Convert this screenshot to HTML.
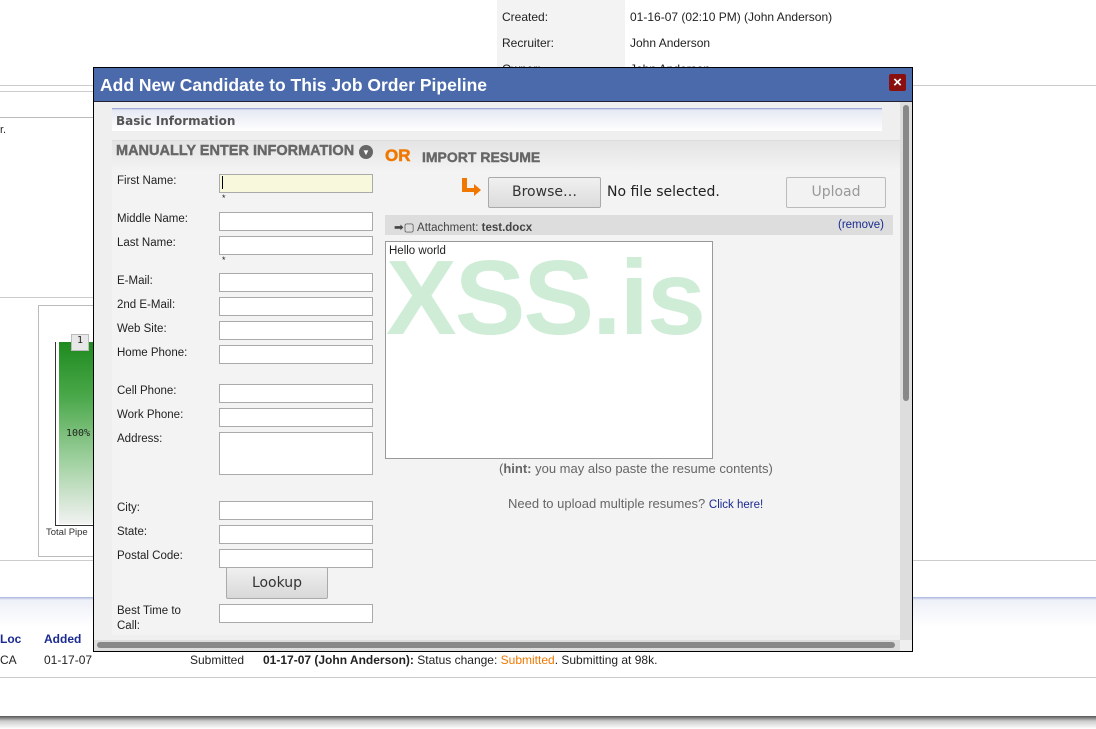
<!DOCTYPE html>
<html><head><style>
body{margin:0;width:1096px;height:729px;overflow:hidden;background:#fff;font-family:"Liberation Sans",sans-serif;font-size:12px;color:#222;position:relative}
.a{position:absolute}
.lbl{position:absolute;left:117px;font-size:11.5px;color:#222}
.in{position:absolute;left:219px;width:152px;height:17px;border:1px solid #aaa;background:#fff}
</style></head><body>
<div class="a" style="left:497px;top:0;width:128px;height:85px;background:#f3f3f3"></div>
<div class="a" style="left:502px;top:10px">Created:</div>
<div class="a" style="left:630px;top:10px">01-16-07 (02:10 PM) (John Anderson)</div>
<div class="a" style="left:502px;top:36px">Recruiter:</div>
<div class="a" style="left:630px;top:36px">John Anderson</div>
<div class="a" style="left:502px;top:62px">Owner:</div>
<div class="a" style="left:630px;top:62px">John Anderson</div>
<div class="a" style="left:0;top:85px;width:1096px;height:1px;background:#ccc"></div>
<div class="a" style="left:0;top:91px;width:93px;height:1px;background:#ccc"></div>
<div class="a" style="left:0;top:117px;width:93px;height:1px;background:#bbb"></div>
<div class="a" style="left:0;top:124px;font-size:11px">r.</div>
<div class="a" style="left:0;top:297px;width:93px;height:1px;background:#ccc"></div>
<div class="a" style="left:38px;top:305px;width:60px;height:250px;border:1px solid #bbb"></div>
<div class="a" style="left:59px;top:342px;width:40px;height:182px;background:linear-gradient(#1e8a1e,#4aa84a 30%,#9fd09f 65%,#f2f2f2)"></div>
<div class="a" style="left:55px;top:342px;width:1px;height:184px;background:#333"></div>
<div class="a" style="left:55px;top:525px;width:40px;height:1px;background:#333"></div>
<div class="a" style="left:71px;top:334px;width:16px;height:15px;background:#e8e8e8;border:1px solid #bbb;font-size:10px;text-align:center;font-family:'DejaVu Sans Mono',monospace">1</div>
<div class="a" style="left:66px;top:428px;font-size:10px;font-family:'DejaVu Sans Mono',monospace">100%</div>
<div class="a" style="left:46px;top:527px;font-size:9.5px;color:#333">Total Pipe</div>
<div class="a" style="left:0;top:560px;width:1096px;height:1px;background:#ccc"></div>
<div class="a" style="left:0;top:597px;width:1096px;height:30px;background:linear-gradient(#a8b4dc,#eef0f8 3px,#fff)"></div>
<div class="a" style="left:0;top:632px;font-weight:bold;color:#1a2a90">Loc</div>
<div class="a" style="left:44px;top:632px;font-weight:bold;color:#1a2a90">Added</div>
<div class="a" style="left:0;top:653px">CA</div>
<div class="a" style="left:44px;top:653px">01-17-07</div>
<div class="a" style="left:190px;top:653px">Submitted</div>
<div class="a" style="left:263px;top:653px"><b>01-17-07 (John Anderson):</b> Status change: <span style="color:#f07800">Submitted</span>. Submitting at 98k.</div>
<div class="a" style="left:0;top:677px;width:1096px;height:1px;background:#ccc"></div>
<div class="a" style="left:0;top:716px;width:1096px;height:13px;background:linear-gradient(#555,#ccc 5px,#fff)"></div>

<div class="a" style="left:93px;top:67px;width:818px;height:583px;border:1px solid #000;background:#efefef">
 <div class="a" style="left:0;top:0;width:818px;height:33px;background:#4a6aac;border-bottom:1px solid #223"></div>
 <div class="a" style="left:6px;top:7px;color:#fff;font-size:17.5px;font-weight:bold">Add New Candidate to This Job Order Pipeline</div>
 <div class="a" style="left:795px;top:6px;width:17px;height:17px;background:#8a1010;border-radius:2px;color:#fff;font-size:15px;font-weight:bold;text-align:center;line-height:17px">×</div>
 <div class="a" style="left:806px;top:34px;width:12px;height:538px;background:#ddd"><div style="margin:3px 3px;width:6px;height:296px;background:#888;border-radius:3px"></div></div>
 <div class="a" style="left:0;top:572px;width:806px;height:11px;background:#ddd"><div style="margin:2px 3px;width:798px;height:6px;background:#888;border-radius:3px"></div></div>
</div>
<div class="a" style="left:112px;top:108px;width:770px;height:23px;background:linear-gradient(#8898d0,#e6e9f4 2px,#fff);"></div>
<div class="a" style="left:116px;top:114px;font-weight:bold;font-size:12px;color:#555;font-family:'DejaVu Sans',sans-serif">Basic Information</div>
<div class="a" style="left:112px;top:140px;width:788px;height:494px;background:#f3f3f3;border-top:1px solid #ddd"></div>
<div class="a" style="left:112px;top:141px;width:788px;height:30px;background:linear-gradient(#e4e4e4,#f3f3f3)"></div>
<div class="a" style="left:116px;top:143px;font-weight:bold;font-size:14.5px;color:#666;-webkit-text-stroke:0.4px #666">MANUALLY ENTER INFORMATION</div>
<div class="a" style="left:359px;top:145px;width:14px;height:14px;border-radius:7px;background:#666;color:#fff;font-size:8px;text-align:center;line-height:15px">▼</div>
<div class="a" style="left:385px;top:146px;font-weight:bold;font-size:17px;color:#f07800;-webkit-text-stroke:0.5px #f07800">OR</div>
<div class="a" style="left:422px;top:149px;font-weight:bold;font-size:14px;color:#666;-webkit-text-stroke:0.4px #666">IMPORT RESUME</div>
<div class="a" style="left:462px;top:178px;width:5px;height:12px;background:#f07800"></div>
<div class="a" style="left:462px;top:188px;width:14px;height:4px;background:#f07800"></div>
<div class="a" style="left:474px;top:184px;border-left:7px solid #f07800;border-top:6px solid transparent;border-bottom:6px solid transparent"></div>
<div class="a" style="left:488px;top:177px;width:111px;height:29px;border:1px solid #aaa;border-radius:2px;background:linear-gradient(#f0f0f0,#dcdcdc);font-size:14px;text-align:center;line-height:29px;color:#333;font-family:'DejaVu Sans',sans-serif">Browse…</div>
<div class="a" style="left:607px;top:184px;font-size:14px;font-family:'DejaVu Sans',sans-serif">No file selected.</div>
<div class="a" style="left:786px;top:177px;width:98px;height:29px;border:1px solid #bbb;border-radius:2px;background:#f2f2f2;font-size:14px;text-align:center;line-height:29px;color:#999;font-family:'DejaVu Sans',sans-serif">Upload</div>
<div class="a" style="left:385px;top:215px;width:508px;height:20px;background:#ddd"></div>
<div class="a" style="left:394px;top:220px;color:#444;font-size:11.5px">➡▢ Attachment: <b>test.docx</b></div>
<div class="a" style="left:838px;top:219px;color:#1a2a90;font-size:11.5px">(remove)</div>
<div class="a" style="left:385px;top:241px;width:326px;height:216px;border:1px solid #999;background:#fff"></div>
<div class="a" style="left:385px;top:241px;width:328px;height:218px;overflow:hidden"><div class="a" style="left:1px;top:4px;font-size:106px;font-weight:bold;color:rgba(60,180,90,0.25);letter-spacing:-2px;line-height:106px;white-space:nowrap">XSS.is</div></div>
<div class="a" style="left:389px;top:245px;font-size:11.5px">Hello world</div>
<div class="a" style="left:499px;top:461px;font-size:13px;color:#666">(<b>hint:</b> you may also paste the resume contents)</div>
<div class="a" style="left:508px;top:496px;font-size:13px;color:#666">Need to upload multiple resumes? <span style="font-size:11.5px;color:#1a2a90">Click here!</span></div>

<div class="lbl" style="top:175px">First Name:</div><div class="in" style="top:174px;background:#f8f8dc"></div><div class="a" style="left:222px;top:176px;width:1px;height:13px;background:#000"></div>
<div class="a" style="left:222px;top:193px;font-size:9px">*</div>
<div class="lbl" style="top:213px">Middle Name:</div><div class="in" style="top:212px"></div>
<div class="lbl" style="top:237px">Last Name:</div><div class="in" style="top:236px"></div>
<div class="a" style="left:222px;top:255px;font-size:9px">*</div>
<div class="lbl" style="top:275px">E-Mail:</div><div class="in" style="top:273px"></div>
<div class="lbl" style="top:299px">2nd E-Mail:</div><div class="in" style="top:297px"></div>
<div class="lbl" style="top:323px">Web Site:</div><div class="in" style="top:321px"></div>
<div class="lbl" style="top:347px">Home Phone:</div><div class="in" style="top:345px"></div>
<div class="lbl" style="top:385px">Cell Phone:</div><div class="in" style="top:384px"></div>
<div class="lbl" style="top:409px">Work Phone:</div><div class="in" style="top:408px"></div>
<div class="lbl" style="top:433px">Address:</div><div class="in" style="top:432px;height:41px"></div>
<div class="lbl" style="top:502px">City:</div><div class="in" style="top:501px"></div>
<div class="lbl" style="top:526px">State:</div><div class="in" style="top:525px"></div>
<div class="lbl" style="top:550px">Postal Code:</div><div class="in" style="top:549px"></div>
<div class="a" style="left:226px;top:567px;width:100px;height:30px;border:1px solid #aaa;border-radius:2px;background:linear-gradient(#f0f0f0,#d8d8d8);font-size:14px;text-align:center;line-height:30px;color:#333;font-family:'DejaVu Sans',sans-serif">Lookup</div>
<div class="lbl" style="top:604px;line-height:15px">Best Time to<br>Call:</div><div class="in" style="top:604px"></div>
</body></html>
